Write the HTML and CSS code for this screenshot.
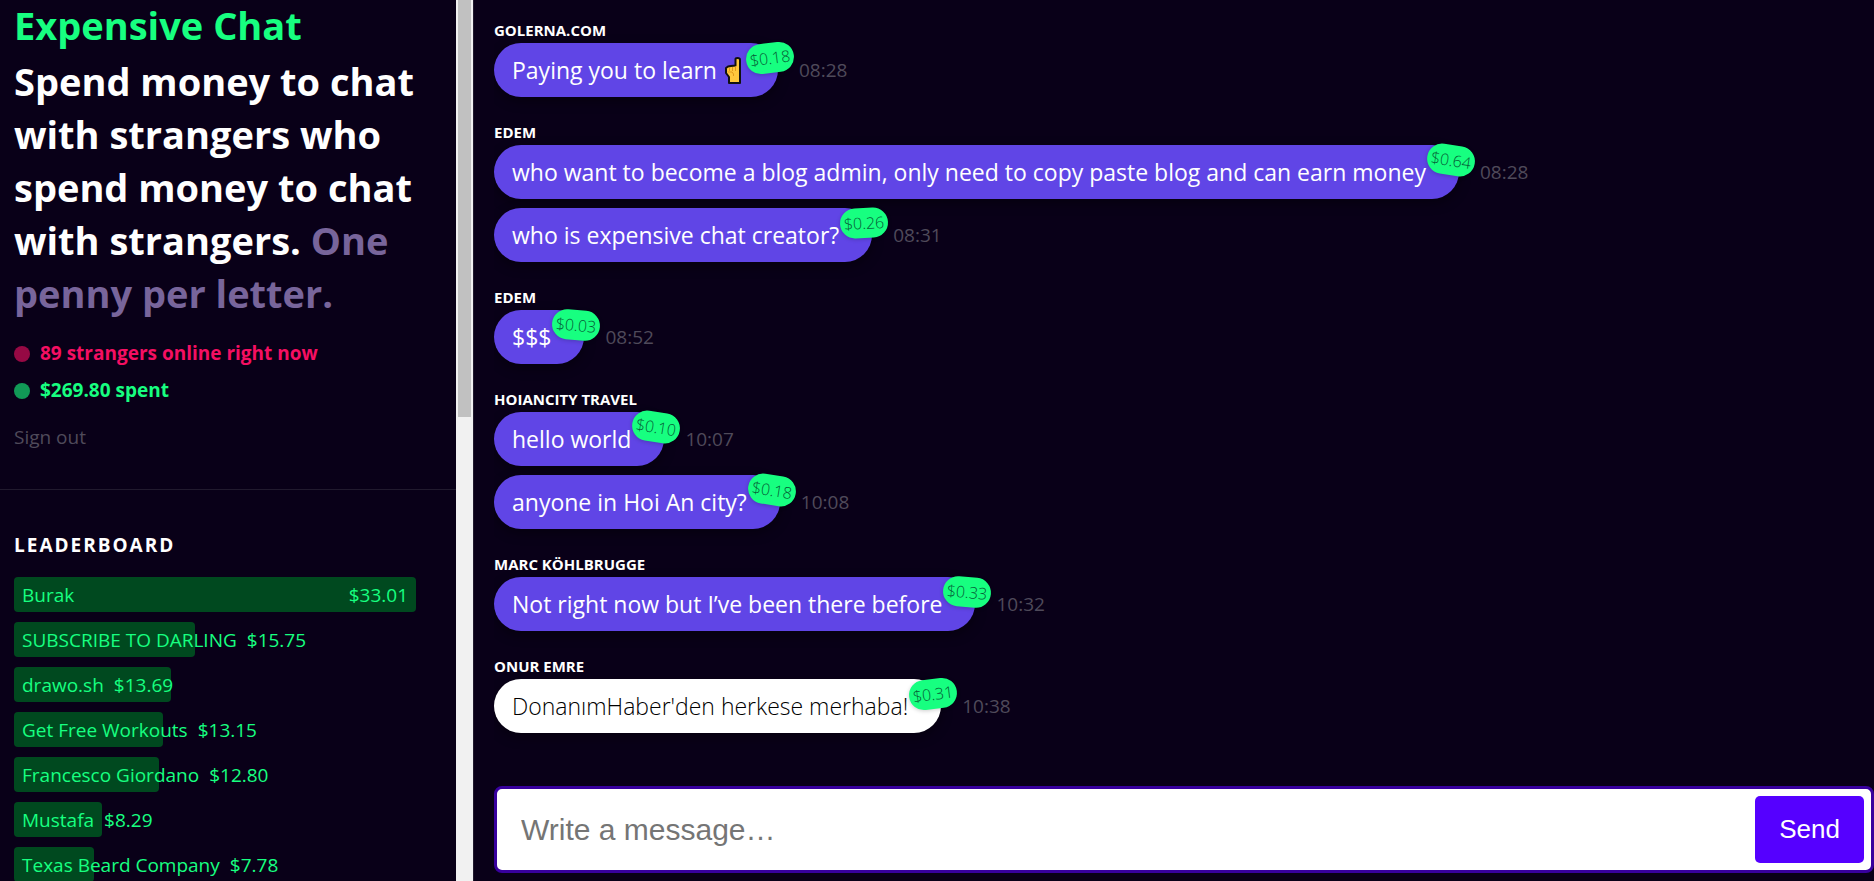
FILE: index.html
```
<!DOCTYPE html>
<html lang="en">
<head>
    <meta charset="UTF-8">
    <meta name="viewport" content="width=device-width, initial-scale=1.0">
    <title>Expensive Chat</title>
    <link rel="stylesheet" href="styles.css">
</head>
<body>
<aside class="sidebar">
    <div class="sidebar-content">
        <header class="intro">
            <h1 class="brand">Expensive Chat</h1>
            <h2 class="tagline">Spend money to chat with strangers who spend money to chat with strangers. <span class="muted">One penny per letter.</span></h2>
            <p class="status online"><span class="dot"></span>89 strangers online right now</p>
            <p class="status spent"><span class="dot"></span>$269.80 spent</p>
            <a href="#" class="sign-out">Sign out</a>
        </header>

        <section class="leaderboard">
            <h3>Leaderboard</h3>
            <ol>
                <li style="width: 100%"><span>Burak</span><span>$33.01</span></li>
                <li style="width: 45%"><span>SUBSCRIBE TO DARLING</span><span>$15.75</span></li>
                <li style="width: 39%"><span>drawo.sh</span><span>$13.69</span></li>
                <li style="width: 37%"><span>Get Free Workouts</span><span>$13.15</span></li>
                <li style="width: 36%"><span>Francesco Giordano</span><span>$12.80</span></li>
                <li style="width: 22%"><span>Mustafa</span><span>$8.29</span></li>
                <li style="width: 20%"><span>Texas Beard Company</span><span>$7.78</span></li>
            </ol>
        </section>
    </div>
    <div class="scrollbar"><div class="thumb"></div></div>
</aside>

<main class="chat">
    <div class="messages">
        <section class="group">
            <h4>golerna.com</h4>
            <div class="message">
                <p class="bubble">Paying you to learn
                    <svg class="emoji" viewBox="0 0 16 27" role="img" aria-label="pointing up">
                        <path d="M4 26V20L1 16V11L3 9.500L6 9L10.500 8.500V2Q10.500 1 12.500 1Q15 1 15 2.500V26Z" fill="#ffc83d" stroke="#111" stroke-width="2" stroke-linejoin="round"/>
                        <path d="M4.500 11V14M7.500 10V14M2.500 15H7L8.500 17V19M10.500 9.500V14" fill="none" stroke="#e19a1c" stroke-width="1"/>
                    </svg>
                    <span class="price tilt-left">$0.18</span>
                </p>
                <time>08:28</time>
            </div>
        </section>

        <section class="group">
            <h4>Edem</h4>
            <div class="message">
                <p class="bubble">who want to become a blog admin, only need to copy paste blog and can earn money<span class="price tilt-right">$0.64</span></p>
                <time>08:28</time>
            </div>
            <div class="message">
                <p class="bubble">who is expensive chat creator?<span class="price tilt-left-slight">$0.26</span></p>
                <time>08:31</time>
            </div>
        </section>

        <section class="group">
            <h4>Edem</h4>
            <div class="message">
                <p class="bubble">$$$<span class="price tilt-right-slight">$0.03</span></p>
                <time>08:52</time>
            </div>
        </section>

        <section class="group">
            <h4>Hoiancity Travel</h4>
            <div class="message">
                <p class="bubble">hello world<span class="price tilt-right">$0.10</span></p>
                <time>10:07</time>
            </div>
            <div class="message">
                <p class="bubble">anyone in Hoi An city?<span class="price tilt-right">$0.18</span></p>
                <time>10:08</time>
            </div>
        </section>

        <section class="group">
            <h4>Marc Köhlbrugge</h4>
            <div class="message">
                <p class="bubble">Not right now but I’ve been there before<span class="price tilt-right-slight">$0.33</span></p>
                <time>10:32</time>
            </div>
        </section>

        <section class="group">
            <h4>Onur Emre</h4>
            <div class="message">
                <p class="bubble own">DonanımHaber'den herkese merhaba!<span class="price tilt-left">$0.31</span></p>
                <time>10:38</time>
            </div>
        </section>
    </div>

    <form class="composer">
        <input type="text" placeholder="Write a message…" aria-label="Write a message">
        <button type="submit">Send</button>
    </form>
</main>
</body>
</html>
```
FILE: styles.css
```
* {
    box-sizing: border-box;
}
body {
    margin: 0;
    display: flex;
    height: 100vh;
    overflow: hidden;
    background-color: #090018;
    color: #fff;
    font-family: "Segoe UI", "Open Sans", "Noto Sans", sans-serif;
}
h1, h2, h3, h4, p, ol {
    margin: 0;
    padding: 0;
}

/* Sidebar */
.sidebar {
    display: flex;
    flex: 0 0 474px;
    border-right: 1px solid #211a2e;
    overflow: hidden;
}
.sidebar-content {
    flex: 1;
}
.intro {
    padding: 0 14px 33px;
    border-bottom: 1px solid #211a2e;
}
.brand {
    color: #17ff80;
    font-size: 38px;
    line-height: 50px;
    margin-bottom: 5px;
}
.tagline {
    font-size: 38px;
    line-height: 53px;
    margin-bottom: 15px;
}
.muted {
    color: #78659b;
}
.status {
    display: flex;
    align-items: center;
    gap: 10px;
    font-size: 19px;
    font-weight: 700;
    line-height: 37px;
}
.dot {
    width: 16px;
    height: 16px;
    border-radius: 50%;
    background-color: currentColor;
    opacity: 0.6;
}
.online {
    color: #f50f62;
}
.spent {
    color: #17ff80;
}
.sign-out {
    display: block;
    margin-top: 10px;
    color: #4f4a5a;
    font-size: 19px;
    line-height: 37px;
    text-decoration: none;
}
.leaderboard {
    padding: 40px 40px 0 14px;
}
.leaderboard h3 {
    font-size: 19px;
    line-height: 30px;
    letter-spacing: 2px;
    text-transform: uppercase;
    margin-bottom: 17px;
}
.leaderboard ol {
    list-style: none;
}
.leaderboard li {
    display: flex;
    justify-content: space-between;
    gap: 10px;
    height: 35px;
    margin-bottom: 10px;
    padding: 0 8px;
    border-radius: 4px;
    background-color: #00491f;
    color: #17ff80;
    font-size: 19px;
    line-height: 37px;
    white-space: nowrap;
}
.leaderboard span {
    flex-shrink: 0;
}
.scrollbar {
    width: 17px;
    padding: 0 2px;
    background-color: #f1f1f1;
}
.thumb {
    height: 417px;
    background-color: #c1c1c1;
}

/* Chat */
.chat {
    display: flex;
    flex-direction: column;
    flex: 1;
    min-width: 0;
    padding: 0 0 8px 20px;
}
.messages {
    display: flex;
    flex-direction: column;
    justify-content: flex-end;
    flex: 1;
    gap: 24px;
    min-height: 0;
    padding-bottom: 53px;
    overflow: hidden;
}
.group h4 {
    font-size: 15px;
    line-height: 22px;
    margin-bottom: 2px;
    text-transform: uppercase;
}
.message {
    display: flex;
    align-items: center;
    gap: 21px;
}
.message + .message {
    margin-top: 9px;
}
.bubble {
    position: relative;
    padding: 0 33px 0 18px;
    border-radius: 27px;
    background-color: #6045e6;
    box-shadow: 0 4px 12px rgba(0, 0, 0, 0.4);
    font-size: 23px;
    line-height: 54px;
    white-space: nowrap;
}
.own {
    background-color: #fff;
    color: #000;
    font-weight: 300;
}
.price {
    position: absolute;
    top: 0;
    right: -16px;
    width: 48px;
    border-radius: 15px;
    background-color: #17ff80;
    box-shadow: 0 1px 4px rgba(0, 0, 0, 0.2);
    color: #065c36;
    font-size: 16px;
    font-weight: 300;
    line-height: 30px;
    text-align: center;
}
.tilt-left {
    transform: rotate(-7deg);
}
.tilt-left-slight {
    transform: rotate(-3deg);
}
.tilt-right {
    transform: rotate(9deg);
}
.tilt-right-slight {
    transform: rotate(5deg);
}
.emoji {
    width: 16px;
    height: 27px;
    margin: 0 4px 4px 2px;
    vertical-align: middle;
}
.message time {
    color: #4f4a5a;
    font-size: 19px;
}
.composer {
    display: flex;
    padding: 7px;
    border: 3px solid #38009e;
    border-radius: 8px;
    background-color: #fff;
}
.composer input {
    flex: 1;
    min-width: 0;
    padding: 0 17px;
    border: none;
    outline: none;
    background: none;
    font-family: Arial, "Liberation Sans", sans-serif;
    font-size: 30px;
}
.composer input::placeholder {
    color: #757575;
}
.composer button {
    padding: 0 24px;
    border: none;
    border-radius: 5px;
    background-color: #5500ff;
    color: #fff;
    font-family: Arial, "Liberation Sans", sans-serif;
    font-size: 26px;
    line-height: 67px;
    cursor: pointer;
}
```
